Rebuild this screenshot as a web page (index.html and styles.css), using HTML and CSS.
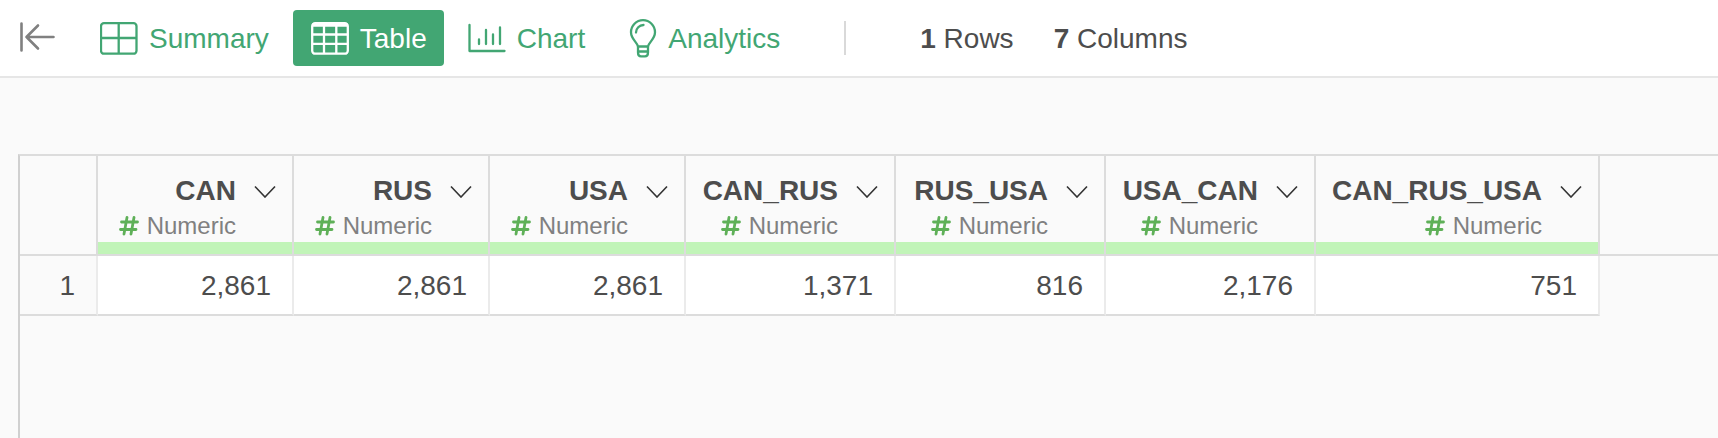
FILE: index.html
```html
<!DOCTYPE html>
<html lang="en">
<head>
    <meta charset="UTF-8">
    <meta name="viewport" content="width=device-width, initial-scale=1.0">
    <title>Table</title>
    <link rel="stylesheet" href="styles.css">
</head>
<body>
    <!-- shared icons -->
    <svg class="sprite" aria-hidden="true">
        <symbol id="chevron" viewBox="0 0 22 14">
            <path d="M1 2.500L11 13L21 2.500" fill="none" stroke="#333" stroke-width="1.600"/>
        </symbol>
        <symbol id="hash" viewBox="0 0 20 20">
            <path d="M2.500 6H18.500M1.500 13.500H17M8 1.500L5 18M15 1.500L12 18" fill="none" stroke="#5fb058" stroke-width="2.800" stroke-linecap="round"/>
        </symbol>
    </svg>

    <header class="toolbar">
        <button type="button" class="back" aria-label="Collapse">
            <svg width="36" height="32" viewBox="0 0 36 32" fill="none" stroke="#808080" stroke-width="2.600" stroke-linecap="round" stroke-linejoin="round">
                <path d="M1.500 1.500V28.500M33.500 15H6.500M18 3.500L6.500 15L18 26.500"/>
            </svg>
        </button>
        <nav class="tabs">
            <button type="button" class="tab">
                <svg width="38" height="34" viewBox="0 0 38 34" fill="none" stroke="currentColor" stroke-width="2.300">
                    <rect x="1" y="1.200" width="35.500" height="30.500" rx="3"/>
                    <path d="M18.700 1.500V31M1 16H36.500"/>
                </svg>
                Summary
            </button>
            <button type="button" class="tab active">
                <svg width="38" height="34" viewBox="0 0 38 34" fill="none" stroke="currentColor" stroke-width="2.300">
                    <rect x="1.200" y="1.200" width="35.600" height="30.500" rx="3"/>
                    <path d="M1.500 3H36.500" stroke-width="3.600"/>
                    <path d="M13 3V31M25.300 3V31M1 12.500H37M1 21.800H37"/>
                </svg>
                Table
            </button>
            <button type="button" class="tab">
                <svg width="38" height="34" viewBox="0 0 38 34" fill="none" stroke="currentColor" stroke-width="2.300" stroke-linecap="round" stroke-linejoin="round">
                    <path d="M1.500 3V29H36.500"/>
                    <path d="M11 17.500V22M18 8V22M25 12.500V22M32 5.500V22"/>
                </svg>
                Chart
            </button>
            <button type="button" class="tab">
                <svg width="30" height="40" viewBox="0 0 30 40" fill="none" stroke="currentColor" stroke-width="2.300" stroke-linejoin="round">
                    <path d="M11 27.500C10 23 4 20 4 13.200A12 12 0 0 1 28 13.200C28 20 22 23 21 27.500Z"/>
                    <path d="M9 13.500A7.500 7.500 0 0 1 16.500 6" stroke-linecap="round"/>
                    <path d="M11 27.500V33.500Q11 37.300 14 37.300H18Q21 37.300 21 33.500V27.500M11 32.500H21"/>
                </svg>
                Analytics
            </button>
        </nav>
        <div class="stats">
            <span><b>1</b> Rows</span>
            <span><b>7</b> Columns</span>
        </div>
    </header>

    <main class="grid">
        <table>
            <colgroup>
                <col class="col-index">
                <col class="col-short">
                <col class="col-short">
                <col class="col-short">
                <col class="col-pair">
                <col class="col-pair">
                <col class="col-pair">
                <col class="col-long">
                <col>
            </colgroup>
            <thead>
                <tr>
                    <th class="index"></th>
                    <th class="column" scope="col">
                        <div class="name">CAN <button type="button" aria-label="CAN menu"><svg width="22" height="14"><use href="#chevron"/></svg></button></div>
                        <div class="type"><svg width="20" height="20"><use href="#hash"/></svg>Numeric</div>
                    </th>
                    <th class="column" scope="col">
                        <div class="name">RUS <button type="button" aria-label="RUS menu"><svg width="22" height="14"><use href="#chevron"/></svg></button></div>
                        <div class="type"><svg width="20" height="20"><use href="#hash"/></svg>Numeric</div>
                    </th>
                    <th class="column" scope="col">
                        <div class="name">USA <button type="button" aria-label="USA menu"><svg width="22" height="14"><use href="#chevron"/></svg></button></div>
                        <div class="type"><svg width="20" height="20"><use href="#hash"/></svg>Numeric</div>
                    </th>
                    <th class="column" scope="col">
                        <div class="name">CAN_RUS <button type="button" aria-label="CAN_RUS menu"><svg width="22" height="14"><use href="#chevron"/></svg></button></div>
                        <div class="type"><svg width="20" height="20"><use href="#hash"/></svg>Numeric</div>
                    </th>
                    <th class="column" scope="col">
                        <div class="name">RUS_USA <button type="button" aria-label="RUS_USA menu"><svg width="22" height="14"><use href="#chevron"/></svg></button></div>
                        <div class="type"><svg width="20" height="20"><use href="#hash"/></svg>Numeric</div>
                    </th>
                    <th class="column" scope="col">
                        <div class="name">USA_CAN <button type="button" aria-label="USA_CAN menu"><svg width="22" height="14"><use href="#chevron"/></svg></button></div>
                        <div class="type"><svg width="20" height="20"><use href="#hash"/></svg>Numeric</div>
                    </th>
                    <th class="column" scope="col">
                        <div class="name">CAN_RUS_USA <button type="button" aria-label="CAN_RUS_USA menu"><svg width="22" height="14"><use href="#chevron"/></svg></button></div>
                        <div class="type"><svg width="20" height="20"><use href="#hash"/></svg>Numeric</div>
                    </th>
                    <th class="filler"></th>
                </tr>
            </thead>
            <tbody>
                <tr>
                    <td class="index">1</td>
                    <td>2,861</td>
                    <td>2,861</td>
                    <td>2,861</td>
                    <td>1,371</td>
                    <td>816</td>
                    <td>2,176</td>
                    <td>751</td>
                    <td class="filler"></td>
                </tr>
            </tbody>
        </table>
    </main>
</body>
</html>
```

FILE: styles.css
```css
* {
    box-sizing: border-box;
}
body {
    margin: 0;
    min-height: 100vh;
    display: flex;
    flex-direction: column;
    background-color: #fafafa;
    color: #4d4d4d;
    font-family: "Liberation Sans", Arial, sans-serif;
    font-size: 28px;
    line-height: 32px;
}
button {
    padding: 0;
    border: 0;
    background: none;
    font: inherit;
    color: inherit;
    cursor: pointer;
}
svg {
    display: block;
    flex: none;
}
.sprite {
    position: absolute;
    width: 0;
    height: 0;
}

/* toolbar */
.toolbar {
    display: flex;
    align-items: center;
    padding: 10px 20px;
    background-color: #fff;
    border-bottom: 2px solid #e6e6e6;
}
.tabs {
    display: flex;
    gap: 6px;
    margin-left: 26px;
}
.tab {
    display: flex;
    align-items: center;
    gap: 11px;
    height: 56px;
    padding: 2px 18px 0;
    border-radius: 4px;
    color: #42a673;
}
.tab.active {
    padding-right: 17px;
    background-color: #42a673;
    color: #fff;
}
.stats {
    display: flex;
    gap: 40px;
    margin-left: 46px;
    padding: 2px 0 0 74px;
    border-left: 2px solid #d9d9d9;
}

/* data grid */
.grid {
    flex: 1;
    margin: 76px 0 0 18px;
    border-top: 2px solid #dcdcdc;
    border-left: 2px solid #d0d0d0;
}
table {
    width: 100%;
    table-layout: fixed;
    border-collapse: separate;
    border-spacing: 0;
}
.col-index {
    width: 78px;
}
.col-short {
    width: 196px;
}
.col-pair {
    width: 210px;
}
.col-long {
    width: 284px;
}
th {
    padding: 0;
    border-right: 2px solid #dcdcdc;
    border-bottom: 2px solid #dcdcdc;
}
.column {
    padding: 18px 16px 0;
    background-color: #fafafa;
}
.column::after {
    content: "";
    display: block;
    height: 12px;
    margin: 2px -16px 0;
    background-color: #c1f4b8;
}
.name {
    display: flex;
    justify-content: flex-end;
    align-items: center;
    gap: 18px;
    line-height: 34px;
}
.type {
    display: flex;
    justify-content: flex-end;
    align-items: center;
    gap: 8px;
    margin-top: 4px;
    padding-right: 40px;
    font-size: 24px;
    font-weight: normal;
    line-height: 28px;
    color: #808080;
}
td {
    padding: 14px 21px 12px;
    background-color: #fff;
    border-right: 2px solid #ebebeb;
    border-bottom: 2px solid #dcdcdc;
    text-align: right;
}
td.index {
    background-color: #fafafa;
}
th.filler {
    border-right: 0;
}
td.filler {
    background: none;
    border: 0;
}
```
